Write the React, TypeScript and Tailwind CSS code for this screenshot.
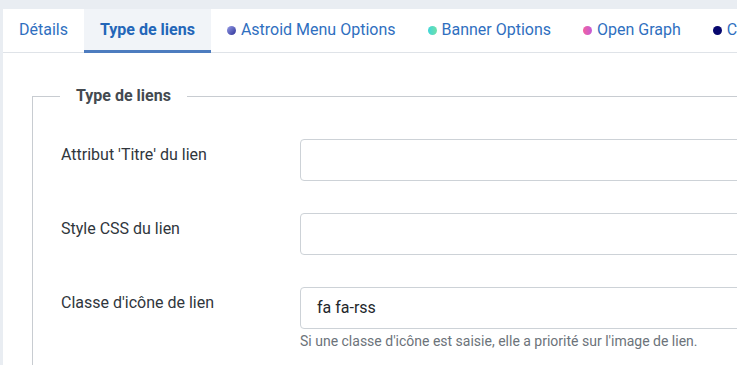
// ── Menu item edit screen: tab strip + "Type de liens" fieldset ─────────────

const FONT = { fontFamily: "Roboto, 'Noto Sans', sans-serif" };

interface Tab {
  label: string;
  dot?: string; // tailwind gradient classes for the little coloured bullet
  active?: boolean;
}

const TABS: Tab[] = [
  { label: "Détails" },
  { label: "Type de liens", active: true },
  { label: "Astroid Menu Options", dot: "bg-gradient-to-br from-[#9a9de8] to-[#2f2f96]" },
  { label: "Banner Options", dot: "bg-gradient-to-r from-[#3fd6d9] to-[#6ee0a8]" },
  { label: "Open Graph", dot: "bg-gradient-to-r from-[#f4609e] to-[#c35ad6]" },
  { label: "Compatibilité", dot: "bg-[#07076e]" },
];

export default function App() {
  return (
    <div className="w-[737px] h-[365px] overflow-hidden bg-[#e9edf2]" style={FONT}>
      <div className="ml-[3px] mt-[9px] w-[1000px] h-[400px] bg-white">
        {/* ── Tabs ── */}
        <div className="flex h-[44px] border-b border-[#dfe3e8]">
          {TABS.map((tab) => (
            <div
              key={tab.label}
              className={
                tab.active
                  ? "relative flex items-center px-4 bg-[#f1f4f8] text-[16px] font-bold text-[#2366b8]"
                  : "flex items-center px-4 text-[16px] text-[#2f6fc0] whitespace-nowrap"
              }
            >
              {tab.dot && <span className={`w-[9px] h-[9px] rounded-full mr-[5px] ${tab.dot}`} />}
              <span className="mt-[-2px]">{tab.label}</span>
              {tab.active && (
                <span className="absolute left-0 right-0 bottom-[-1px] h-[3px] bg-[#4d7cbf]" />
              )}
            </div>
          ))}
        </div>

        {/* ── Fieldset ── */}
        <div className="pl-[29px] pt-[32px]">
          <fieldset className="border border-[#c8ccd1] pl-[28px] pb-10">
            <legend className="ml-[-1px] px-4 text-[16px] leading-[22px] font-bold text-[#444a50]">
              Type de liens
            </legend>

            <div className="flex flex-col gap-8 pt-[32px]">
              <Row label="Attribut 'Titre' du lien" />
              <Row label="Style CSS du lien" />
              <Row
                label="Classe d'icône de lien"
                value="fa fa-rss"
                help="Si une classe d'icône est saisie, elle a priorité sur l'image de lien."
              />
            </div>
          </fieldset>
        </div>
      </div>
    </div>
  );
}

interface RowProps {
  label: string;
  value?: string;
  help?: string;
}

function Row({ label, value, help }: RowProps) {
  return (
    <div className="flex">
      <div className="w-[239px] shrink-0 pt-[5px] text-[16px] leading-[22px] text-[#30363c]">
        {label}
      </div>
      <div className="flex-1">
        <div className="h-[42px] w-[600px] rounded-[4px] border border-[#cdd2d7] flex items-center px-4 text-[16px] text-[#23272b]">
          {value}
        </div>
        {help && <div className="mt-[2px] text-[14px] leading-[20px] text-[#6c737a]">{help}</div>}
      </div>
    </div>
  );
}
